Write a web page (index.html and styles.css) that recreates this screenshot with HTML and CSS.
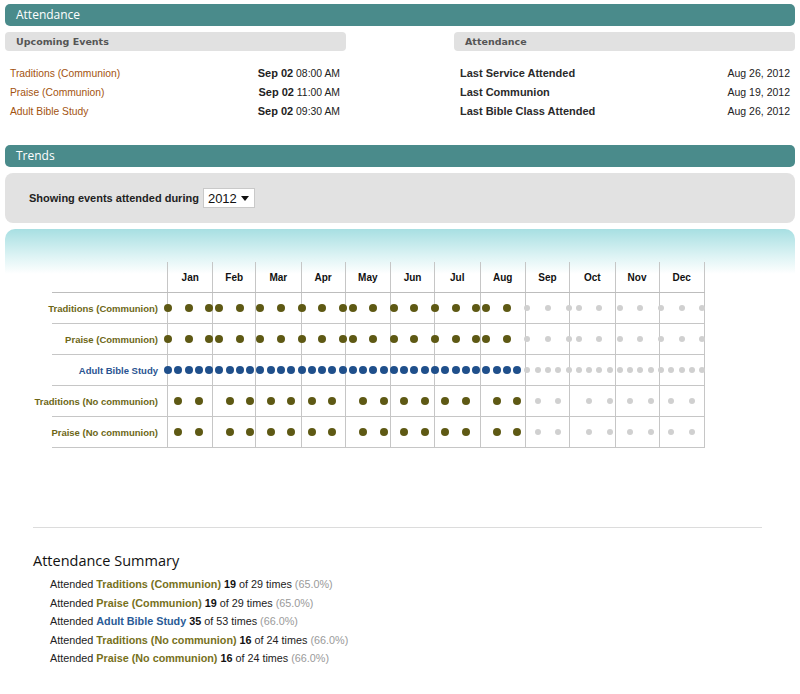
FILE: index.html
```html
<!DOCTYPE html>
<html lang="en">
<head>
<meta charset="utf-8">
<title>Attendance</title>
<link rel="stylesheet" href="styles.css">
</head>
<body>
<div class="page">
  <div class="bar">Attendance</div>
  <div class="overview">
    <section class="panel">
      <div class="subbar">Upcoming Events</div>
      <ul class="rows">
        <li><a class="event">Traditions (Communion)</a><span class="when"><b>Sep 02</b> 08:00 AM</span></li>
        <li><a class="event">Praise (Communion)</a><span class="when"><b>Sep 02</b> 11:00 AM</span></li>
        <li><a class="event">Adult Bible Study</a><span class="when"><b>Sep 02</b> 09:30 AM</span></li>
      </ul>
    </section>
    <section class="panel">
      <div class="subbar">Attendance</div>
      <ul class="rows rows-right">
        <li><b class="key">Last Service Attended</b><span class="date">Aug 26, 2012</span></li>
        <li><b class="key">Last Communion</b><span class="date">Aug 19, 2012</span></li>
        <li><b class="key">Last Bible Class Attended</b><span class="date">Aug 26, 2012</span></li>
      </ul>
    </section>
  </div>

  <div class="bar trends-bar">Trends</div>
  <div class="filter">
    <span>Showing events attended during</span>
    <span class="select">2012<svg class="caret" width="8" height="5" viewBox="0 0 8 5"><path d="M0 0h8L4 5z" fill="#111"/></svg></span>
  </div>

  <div class="chart-wrap">
    <div class="chart" id="chart"></div>
  </div>

  <hr class="divider">
  <h2 class="summary-title">Attendance Summary</h2>
  <ul class="summary">
    <li>Attended <b class="olive">Traditions (Communion)</b> <b>19</b> of 29 times <span class="pct">(65.0%)</span></li>
    <li>Attended <b class="olive">Praise (Communion)</b> <b>19</b> of 29 times <span class="pct">(65.0%)</span></li>
    <li>Attended <b class="blue">Adult Bible Study</b> <b>35</b> of 53 times <span class="pct">(66.0%)</span></li>
    <li>Attended <b class="olive">Traditions (No communion)</b> <b>16</b> of 24 times <span class="pct">(66.0%)</span></li>
    <li>Attended <b class="olive">Praise (No communion)</b> <b>16</b> of 24 times <span class="pct">(66.0%)</span></li>
  </ul>
</div>
<script src="script.js"></script>
</body>
</html>
```

FILE: styles.css
```css
* { box-sizing: border-box; }

body {
  margin: 0;
  padding: 4px 5px 0;
  background: #fff;
  font-family: "Liberation Sans", Arial, sans-serif;
  font-size: 11px;
  color: #222;
}

.bar {
  height: 22px;
  padding-left: 11px;
  border-radius: 5px;
  background: #4a8b8b;
  color: #fff;
  font-family: "Open Sans", sans-serif;
  font-size: 12px;
  line-height: 22px;
}

.overview {
  display: grid;
  grid-template-columns: 341px 341px;
  justify-content: space-between;
  margin-top: 6px;
}

.subbar {
  height: 19px;
  padding-left: 11px;
  border-radius: 4px;
  background: #e1e1e1;
  color: #555;
  font-family: "DejaVu Sans", Verdana, sans-serif;
  font-weight: bold;
  font-size: 9.5px;
  line-height: 19px;
}

.rows {
  list-style: none;
  margin: 13px 0 0;
  padding: 0 6px 0 5px;
}
.rows-right { padding: 0 5px 0 6px; }

.rows li {
  display: flex;
  justify-content: space-between;
  align-items: baseline;
  height: 19px;
  line-height: 19px;
}

.event { color: #a3530f; font-size: 10.3px; }
.when { font-size: 10.4px; }
.when b { font-size: 11px; }
.date { font-size: 10.5px; }
.key { color: #2a2a2a; }

.trends-bar { margin-top: 24px; }

.filter {
  display: flex;
  align-items: center;
  gap: 4px;
  height: 50px;
  margin-top: 6px;
  padding-left: 24px;
  border-radius: 8px;
  background: #e2e2e2;
  font-weight: bold;
  color: #222;
}

.select {
  display: inline-flex;
  align-items: center;
  justify-content: space-between;
  width: 52px;
  height: 20px;
  padding: 0 5px 0 4px;
  border: 1px solid #c9c9c9;
  background: #fff;
  font-weight: normal;
  font-size: 13px;
  color: #111;
}

.chart-wrap {
  margin-top: 6px;
  padding-top: 33px;
  border-radius: 10px 10px 0 0;
  background: linear-gradient(to bottom, #a7dfe2 0, #dff4f5 28px, #fff 45px);
}

.chart {
  width: 653px;
  margin-left: 47px;
}

.crow {
  display: flex;
  height: 31px;
  border-bottom: 1px solid #c6c6c6;
}
.crow.head { border-bottom-color: #bdbdbd; }

.clabel {
  display: flex;
  justify-content: flex-end;
  align-items: center;
  width: 115px;
  flex: none;
  padding-right: 9px;
  white-space: nowrap;
  font-weight: bold;
  font-size: 9.5px;
}
.clabel.olive { color: #6d6717; }
.clabel.blue { color: #2a5491; }

.track {
  position: relative;
  flex: none;
  width: 538px;
  display: grid;
  grid-template-columns: 31fr 29fr 31fr 30fr 31fr 30fr 31fr 31fr 30fr 31fr 30fr 31fr;
  border-left: 1px solid #c6c6c6;
}

.month {
  display: flex;
  align-items: center;
  justify-content: center;
  border-right: 1px solid #c6c6c6;
  font-weight: bold;
  font-size: 10px;
  color: #111;
}

.dot {
  position: absolute;
  top: 50%;
  width: 8px;
  height: 8px;
  border-radius: 50%;
  transform: translate(-50%, -50%);
}
.dot.olive { background: #5e5914; }
.dot.blue { background: #1f4f8b; }
.dot.future { width: 6px; height: 6px; background: #d0d0d0; }

.divider {
  margin: 79px 33px 0 28px;
  border: 0;
  border-top: 1px solid #dcdcdc;
}

.summary-title {
  margin: 23px 0 0 28px;
  font-family: "Open Sans", sans-serif;
  font-weight: normal;
  font-size: 14.5px;
  line-height: 20px;
  color: #111;
}

.summary {
  list-style: none;
  margin: 4px 0 0 45px;
  padding: 0;
  font-size: 10.8px;
  line-height: 18.5px;
  color: #222;
}
.summary b { color: #111; }
.summary b.olive { color: #77711c; }
.summary b.blue { color: #2a5b96; }
.summary .pct { color: #9a9a9a; }
```

FILE: script.js
```js
(function () {
  var months = [["Jan",31],["Feb",29],["Mar",31],["Apr",30],["May",31],["Jun",30],["Jul",31],["Aug",31],["Sep",30],["Oct",31],["Nov",30],["Dec",31]];
  var YEAR_DAYS = 366;
  var LAST_ATTENDED = 238; // Aug 26, 2012

  function dom(d) {
    var i = 0;
    while (d >= months[i][1]) { d -= months[i][1]; i++; }
    return d + 1;
  }
  function communion(d) { var x = dom(d); return x <= 7 || (x >= 15 && x <= 21) || x >= 29; }
  function noCommunion(d) { return !communion(d); }
  function every() { return true; }

  var rows = [
    { label: "Traditions (Communion)", cls: "olive", rule: communion },
    { label: "Praise (Communion)", cls: "olive", rule: communion },
    { label: "Adult Bible Study", cls: "blue", rule: every },
    { label: "Traditions (No communion)", cls: "olive", rule: noCommunion },
    { label: "Praise (No communion)", cls: "olive", rule: noCommunion }
  ];

  var chart = document.getElementById("chart");

  function makeRow(head) {
    var row = document.createElement("div");
    row.className = "crow" + (head ? " head" : "");
    var label = document.createElement("div");
    label.className = "clabel";
    row.appendChild(label);
    var track = document.createElement("div");
    track.className = "track";
    months.forEach(function (m) {
      var c = document.createElement("div");
      c.className = "month";
      if (head) c.textContent = m[0];
      track.appendChild(c);
    });
    row.appendChild(track);
    chart.appendChild(row);
    return { label: label, track: track };
  }

  makeRow(true);

  rows.forEach(function (r) {
    var row = makeRow(false);
    row.label.textContent = r.label;
    row.label.classList.add(r.cls);
    for (var d = 0; d < YEAR_DAYS; d += 7) {
      if (!r.rule(d)) continue;
      var dot = document.createElement("span");
      dot.className = "dot " + (d <= LAST_ATTENDED ? r.cls : "future");
      dot.style.left = (d / YEAR_DAYS * 100) + "%";
      row.track.appendChild(dot);
    }
  });
})();
```
